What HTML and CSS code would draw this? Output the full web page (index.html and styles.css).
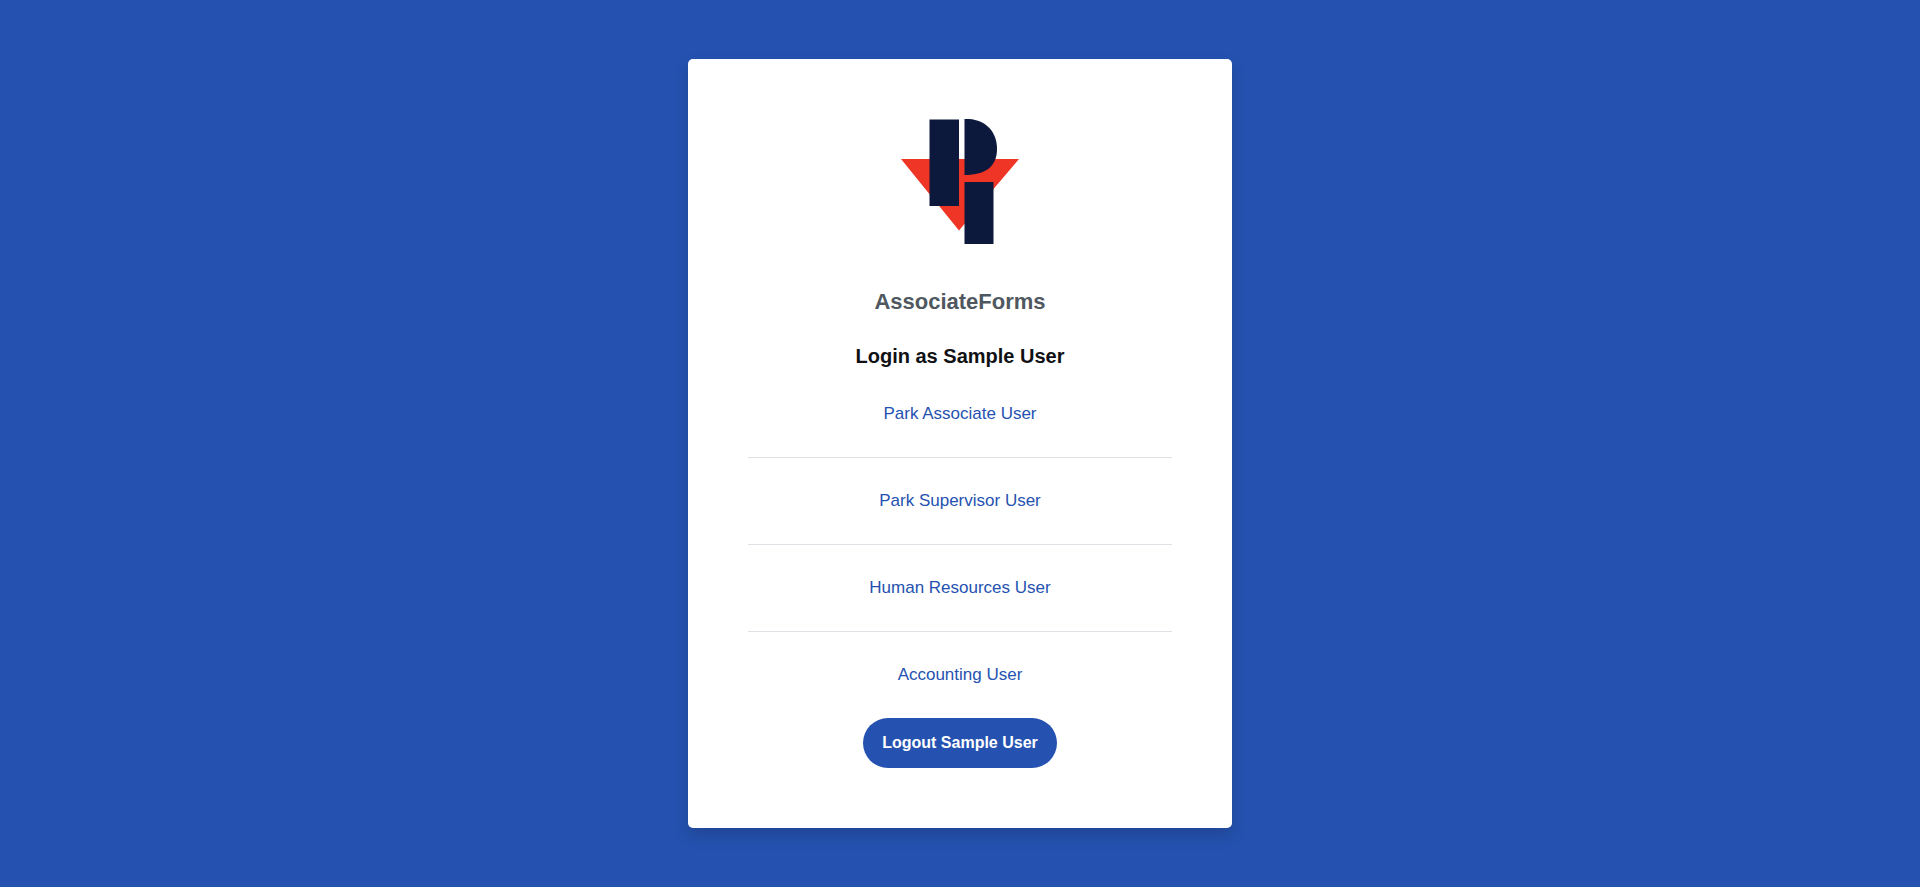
FILE: index.html
```html
<!DOCTYPE html>
<html lang="en">
<head>
<meta charset="utf-8">
<meta name="viewport" content="width=device-width, initial-scale=1">
<title>AssociateForms</title>
<link rel="stylesheet" href="styles.css">
</head>
<body>
<main class="card">
  <svg class="logo" viewBox="0 0 118 125" role="img" aria-label="Logo">
    <path fill="#ef3526" d="M0 40H118L92.500 70L63 105.500L58 111.500Z"/>
    <path fill="#0c193d" d="M28.500 0.500H58V87H28.500Z"/>
    <path fill="#0c193d" d="M63.500 0H68C85 1 96 13 96 30C96 47 85 56 63.500 56Z"/>
    <path fill="#0c193d" d="M63.500 63H92.500V125H63.500Z"/>
  </svg>
  <h1 class="title">AssociateForms</h1>
  <h2 class="subtitle">Login as Sample User</h2>
  <ul class="users">
    <li class="user"><a class="user-link" href="#">Park Associate User</a></li>
    <li class="user"><a class="user-link" href="#">Park Supervisor User</a></li>
    <li class="user"><a class="user-link" href="#">Human Resources User</a></li>
    <li class="user"><a class="user-link" href="#">Accounting User</a></li>
  </ul>
  <button class="logout" type="button">Logout Sample User</button>
</main>
</body>
</html>
```
FILE: styles.css
```css
* {
  box-sizing: border-box;
}

body {
  margin: 0;
  min-height: 100vh;
  display: flex;
  align-items: center;
  justify-content: center;
  background: #2552b0;
  font-family: "Liberation Sans", Arial, sans-serif;
}

.card {
  width: 100%;
  max-width: 544px;
  padding: 60px;
  display: flex;
  flex-direction: column;
  align-items: center;
  background: #fff;
  border-radius: 5px;
  box-shadow: 0 8px 16px rgba(0, 0, 0, 0.15);
}

.logo {
  width: 118px;
  height: 125px;
}

.title {
  margin: 44px 0 0;
  font-size: 22px;
  line-height: 28px;
  color: #4f5860;
}

.subtitle {
  margin: 26px 0 0;
  font-size: 20px;
  line-height: 28px;
  color: #101114;
}

.users {
  width: 100%;
  margin: 32px 0 31px;
  padding: 0;
  list-style: none;
  text-align: center;
}

.user {
  line-height: 24px;
}

.user + .user {
  margin-top: 31px;
  padding-top: 31px;
  border-top: 1px solid #dee2e6;
}

.user-link {
  font-size: 17px;
  color: #2552b0;
  text-decoration: none;
}

.logout {
  padding: 13px 19px;
  border: 0;
  border-radius: 25px;
  background: #2552b0;
  color: #fff;
  font: bold 16px/24px "Liberation Sans", Arial, sans-serif;
  cursor: pointer;
}
```
